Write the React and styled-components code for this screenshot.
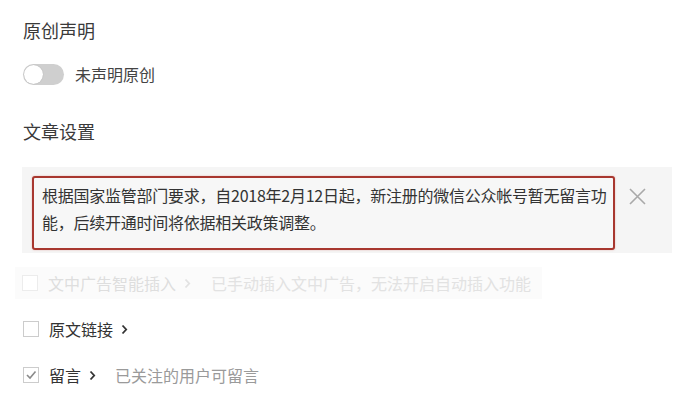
import React from "react";
import styled, { createGlobalStyle } from "styled-components";

const Global = createGlobalStyle`
  html, body { margin: 0; padding: 0; background: #ffffff; }
  body { font-family: "Noto Sans CJK SC", "Noto Sans", sans-serif; color: #333; }
`;

const Page = styled.div`
  width: 685px;
  height: 400px;
  box-sizing: border-box;
  padding: 18px 0 0 23px;
  overflow: hidden;
  display: flex;
  flex-direction: column;
  align-items: flex-start;
`;

const SectionTitle = styled.div`
  font-size: 18px;
  line-height: 24px;
  color: #3a3a3a;
  margin-top: ${(p) => p.$mt || 0}px;
`;

const ToggleRow = styled.div`
  display: flex;
  align-items: center;
  gap: 11px;
  margin-top: 20px;
  height: 24px;
  font-size: 16px;
  color: #444;
`;

const Switch = styled.div`
  position: relative;
  width: 41px;
  height: 21px;
  border-radius: 11px;
  background: #cfcfcf;
  box-sizing: border-box;
`;

const Knob = styled.div`
  position: absolute;
  left: 1px;
  top: 1px;
  width: 19px;
  height: 19px;
  border-radius: 50%;
  background: #fff;
  box-shadow: 0 0 1px rgba(0, 0, 0, 0.25);
`;

const NoticeBox = styled.div`
  margin-top: 24px;
  margin-left: -1px;
  width: 650px;
  box-sizing: border-box;
  padding: 9px 0 3px 10px;
  background: #f5f5f5;
  display: flex;
  align-items: flex-start;
`;

const Notice = styled.div`
  width: 583px;
  box-sizing: border-box;
  border: 2px solid #a8372f;
  border-radius: 3px;
  box-shadow: 0 0 2px rgba(200, 60, 50, 0.35);
  padding: 4px 0 12px 8px;
  font-size: 16px;
  line-height: 27px;
  color: #333;
  letter-spacing: -0.25px;
  background: #f7f7f7;
`;

const Close = styled.button`
  margin: 12px 0 0 14px;
  padding: 0;
  border: none;
  background: transparent;
  width: 17px;
  height: 17px;
  display: flex;
  cursor: pointer;
`;

const Options = styled.div`
  margin-top: 14px;
  display: flex;
  flex-direction: column;
  gap: 14px;
  align-items: flex-start;
`;

const Row = styled.div`
  display: flex;
  align-items: center;
  height: 32px;
  box-sizing: border-box;
  font-size: 16px;
  color: ${(p) => (p.$disabled ? "#dedede" : "#333")};
  ${(p) =>
    p.$disabled &&
    `
    margin-left: -8px;
    padding-left: 7px;
    width: 527px;
    background: #fbfbfb;
  `}
`;

const Box = styled.span`
  width: 16px;
  height: 16px;
  box-sizing: border-box;
  border: 1px solid ${(p) => (p.$disabled ? "#ececec" : "#cccccc")};
  background: #fff;
  display: inline-flex;
  align-items: center;
  justify-content: center;
  margin-right: 10px;
  flex-shrink: 0;
`;

const Label = styled.span`
  white-space: nowrap;
`;

const Chevron = styled.svg`
  margin-left: 8px;
  flex-shrink: 0;
`;

const Desc = styled.span`
  margin-left: ${(p) => p.$ml || 20}px;
  color: ${(p) => (p.$disabled ? "#e2e2e2" : "#9a9a9a")};
  white-space: nowrap;
`;

const Arrow = ({ color }) => (
  <Chevron width="7" height="11" viewBox="0 0 7 11">
    <path d="M1.5 1.5 L5.2 5.5 L1.5 9.5" fill="none" stroke={color} strokeWidth="1.8" />
  </Chevron>
);

export default function App() {
  return (
    <>
      <Global />
      <Page>
        <SectionTitle>原创声明</SectionTitle>
        <ToggleRow>
          <Switch>
            <Knob />
          </Switch>
          <span>未声明原创</span>
        </ToggleRow>
        <SectionTitle $mt={33}>文章设置</SectionTitle>
        <NoticeBox>
          <Notice>
            根据国家监管部门要求，自2018年2月12日起，新注册的微信公众帐号暂无留言功能，后续开通时间将依据相关政策调整。
          </Notice>
          <Close aria-label="关闭">
            <svg width="17" height="17" viewBox="0 0 17 17">
              <path d="M1 1 L16 16 M16 1 L1 16" stroke="#a9a9a9" strokeWidth="1.6" fill="none" />
            </svg>
          </Close>
        </NoticeBox>
        <Options>
          <Row $disabled>
            <Box $disabled />
            <Label>文中广告智能插入</Label>
            <Arrow color="#e2e2e2" />
            <Desc $disabled $ml={20}>已手动插入文中广告，无法开启自动插入功能</Desc>
          </Row>
          <Row>
            <Box />
            <Label>原文链接</Label>
            <Arrow color="#333" />
          </Row>
          <Row>
            <Box>
              <svg width="12" height="10" viewBox="0 0 12 10">
                <path d="M2 5 L5 8 L10.5 1.5" fill="none" stroke="#8a8a8a" strokeWidth="1.6" />
              </svg>
            </Box>
            <Label>留言</Label>
            <Arrow color="#333" />
            <Desc $ml={19}>已关注的用户可留言</Desc>
          </Row>
        </Options>
      </Page>
    </>
  );
}
